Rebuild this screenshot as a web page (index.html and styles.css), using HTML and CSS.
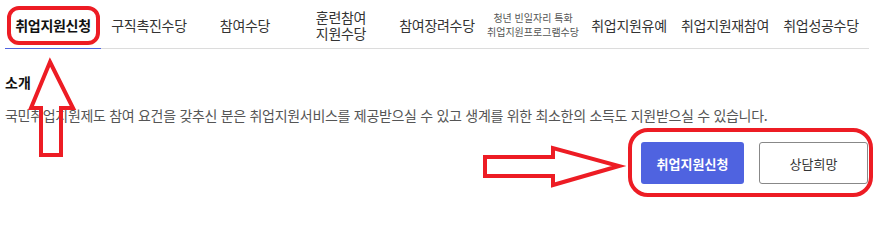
FILE: index.html
```html
<!DOCTYPE html>
<html lang="ko">
<head>
<meta charset="utf-8">
<title>국민취업지원제도</title>
<link rel="stylesheet" href="styles.css">
</head>
<body>
<div class="page">
  <nav class="tabs">
    <a class="tab active">취업지원신청</a>
    <a class="tab">구직촉진수당</a>
    <a class="tab">참여수당</a>
    <a class="tab two">훈련참여<br>지원수당</a>
    <a class="tab">참여장려수당</a>
    <a class="tab small">청년 빈일자리 특화<br>취업지원프로그램수당</a>
    <a class="tab">취업지원유예</a>
    <a class="tab">취업지원재참여</a>
    <a class="tab">취업성공수당</a>
  </nav>
  <section class="intro">
    <h2 class="intro-title">소개</h2>
    <p class="intro-text">국민취업지원제도 참여 요건을 갖추신 분은 취업지원서비스를 제공받으실 수 있고 생계를 위한 최소한의 소득도 지원받으실 수 있습니다.</p>
    <div class="actions">
      <a class="btn btn-primary">취업지원신청</a>
      <a class="btn btn-outline">상담희망</a>
    </div>
  </section>
</div>
<svg class="marks" width="874" height="207" viewBox="0 0 874 207" aria-hidden="true">
  <rect x="9" y="8" width="89" height="35" rx="10" ry="10" />
  <path d="M50 62 L73 108 L61 108 L61 155 L41 155 L41 108 L31 108 Z" />
  <path d="M485 157 L553 157 L553 148 L619 166 L553 185 L553 176 L485 176 Z" />
  <rect x="630" y="130" width="241" height="65" rx="18" ry="18" />
</svg>
</body>
</html>
```

FILE: styles.css
```css
* { box-sizing: border-box; }

html, body {
  margin: 0;
  padding: 0;
  background: #fff;
}

body {
  font-family: "Noto Sans CJK KR", "Noto Sans", sans-serif;
  color: #333;
  width: 874px;
  height: 207px;
  overflow: hidden;
  position: relative;
}

.page {
  padding: 0 6px 0 5px;
}

.tabs {
  display: flex;
  height: 49px;
  width: 864px;
  border-bottom: 1px solid #dcdcdc;
}

.tab {
  width: 96px;
  flex: 0 0 96px;
  display: flex;
  align-items: center;
  justify-content: center;
  text-align: center;
  font-size: 14px;
  letter-spacing: -0.3px;
  line-height: 17px;
  color: #333;
  padding-top: 2px;
  white-space: nowrap;
}

.tab.two {
  line-height: 16px;
}

.tab.active {
  font-weight: 700;
  color: #111;
  border-bottom: 1px solid #4f63e0;
  margin-bottom: -1px;
}

.tab.small {
  font-size: 10px;
  letter-spacing: 0;
  line-height: 14px;
  color: #555;
}

.intro {
  padding-top: 22px;
}

.intro-title {
  margin: 0;
  font-size: 14px;
  line-height: 22px;
  font-weight: 700;
  color: #111;
}

.intro-text {
  margin: 12px 0 0;
  font-size: 14px;
  letter-spacing: -0.3px;
  line-height: 20px;
  color: #555;
  white-space: nowrap;
}

.actions {
  display: flex;
  justify-content: flex-end;
  gap: 15px;
  margin-top: 17px;
}

.btn {
  display: flex;
  align-items: center;
  justify-content: center;
  height: 42px;
  border-radius: 3px;
  font-size: 13px;
}

.btn-primary {
  width: 103px;
  background: #4f63e0;
  color: #fff;
  font-weight: 700;
}

.btn-outline {
  width: 109px;
  background: #fff;
  color: #333;
  border: 1px solid #888;
}

.marks {
  position: absolute;
  left: 0;
  top: 0;
  pointer-events: none;
  fill: none;
  stroke: #ed1c24;
  stroke-width: 4;
  stroke-linejoin: miter;
}
```
